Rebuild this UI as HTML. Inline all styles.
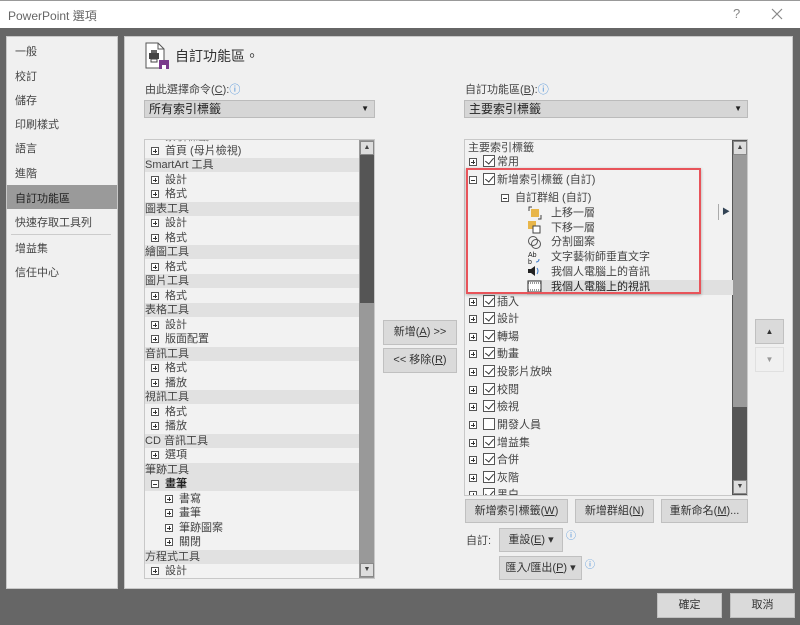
<!DOCTYPE html>
<html><head><meta charset="utf-8"><style>
*{margin:0;padding:0;box-sizing:border-box}
body{width:800px;height:625px;background:#666;position:relative;overflow:hidden;font-family:"Liberation Sans","Noto Sans CJK TC",sans-serif;font-size:11px;color:#444}
.a{position:absolute;white-space:nowrap}
.title{left:0;top:0;width:800px;height:28px;background:#fff;border-top:1px solid #999}
.panel{background:#f0f0f0;border:1px solid #c8c8c8}
.nav div{position:absolute;left:8px;font-size:11px;color:#444}
.btn{position:absolute;background:#dadada;border:1px solid #c0c0c0;text-align:center;font-size:11px;color:#333;line-height:20px}
.list{background:#f2f2f2;border:1px solid #c8c8c8}
.r{position:absolute;left:0;height:14px;line-height:14px;font-size:11px;color:#444}
.h{background:#e1e1e1;width:214px}
.pb{display:inline-block;width:8px;height:8px;border:1px solid #555;position:relative;vertical-align:-1px;margin-right:6px;background:#fff}
.pb:before{content:"";position:absolute;left:1px;top:2.5px;width:4px;height:1px;background:#333}
.pb.p:after{content:"";position:absolute;left:2.5px;top:1px;width:1px;height:4px;background:#333}
.cb{display:inline-block;width:12px;height:12px;border:1px solid #555;background:#fff;vertical-align:-2px;margin-right:2px;position:relative}
.cb.c:after{content:"";position:absolute;left:3px;top:0px;width:4px;height:7px;border-right:1px solid #333;border-bottom:1px solid #333;transform:rotate(40deg)}
</style></head><body>
<div class="a title"></div>
<div class="a" style="left:8px;top:7px;font-size:12px;color:#666">PowerPoint 選項</div>
<div class="a" style="left:733px;top:6px;font-size:13px;color:#888">?</div>
<svg class="a" style="left:771px;top:8px" width="12" height="12"><path d="M1 1L11 11M11 1L1 11" stroke="#888" stroke-width="1.2"/></svg>

<div class="a panel nav" style="left:6px;top:36px;width:112px;height:553px">
<div style="top:6px">一般</div>
<div style="top:31px">校訂</div>
<div style="top:55px">儲存</div>
<div style="top:79px">印刷樣式</div>
<div style="top:103px">語言</div>
<div style="top:128px">進階</div>
<div style="top:148px;left:0;width:110px;height:24px;background:#9a9a9a"></div>
<div style="top:153px;color:#222">自訂功能區</div>
<div style="top:177px">快速存取工具列</div>
<div style="top:197px;left:4px;width:100px;height:1px;background:#ccc"></div>
<div style="top:203px">增益集</div>
<div style="top:227px">信任中心</div>
</div>

<div class="a panel" style="left:124px;top:36px;width:669px;height:553px"></div>
<svg class="a" style="left:145px;top:42px" width="26" height="28" viewBox="0 0 26 28"><path d="M1 1h12l6 6v19H1z" fill="#fff" stroke="#555"/><path d="M13 1v6h6" fill="none" stroke="#555"/><rect x="4" y="11" width="10" height="6" fill="#444"/><rect x="6" y="8" width="6" height="3" fill="#666"/><rect x="6" y="17" width="6" height="3" fill="#fff" stroke="#444"/><rect x="14" y="18" width="10" height="9" fill="#7a3a8c"/><rect x="17" y="23" width="4" height="4" fill="#fff"/></svg>
<div class="a" style="left:175px;top:46px;font-size:14px;color:#333">自訂功能區。</div>
<div class="a" style="left:145px;top:81px;color:#444">由此選擇命令(<u>C</u>):<span style="color:#4a90d9">ⓘ</span></div>
<div class="a" style="left:144px;top:100px;width:231px;height:18px;background:#d6d6d6;border:1px solid #bbb;padding-left:4px;line-height:16px;color:#222;font-size:12px">所有索引標籤<span style="position:absolute;right:5px;font-size:8px">▼</span></div>
<div class="a" style="left:465px;top:81px;color:#444">自訂功能區(<u>B</u>):<span style="color:#4a90d9">ⓘ</span></div>
<div class="a" style="left:464px;top:100px;width:284px;height:18px;background:#d6d6d6;border:1px solid #bbb;padding-left:4px;line-height:16px;color:#222;font-size:12px">主要索引標籤<span style="position:absolute;right:5px;font-size:8px">▼</span></div>

<div class="a list" style="left:144px;top:139px;width:231px;height:440px;overflow:hidden">
<div class="a" style="left:214px;top:0;width:16px;height:439px;background:#999"></div>
<div class="a" style="left:215px;top:15px;width:14px;height:148px;background:#555"></div>
<div class="a" style="left:215px;top:1px;width:14px;height:14px;background:#ddd;border:1px solid #888;font-size:7px;text-align:center;line-height:12px">▲</div>
<div class="a" style="left:215px;top:423px;width:14px;height:14px;background:#ddd;border:1px solid #888;font-size:7px;text-align:center;line-height:12px">▼</div>
<div class="r" style="top:-10px;left:20px;color:#777">索引標籤</div>
<div class="r" style="top:4px;left:6px"><span class="pb p"></span>首頁 (母片檢視)</div>
<div class="r h" style="top:18px">SmartArt 工具</div>
<div class="r" style="top:33px;left:6px"><span class="pb p"></span>設計</div>
<div class="r" style="top:47px;left:6px"><span class="pb p"></span>格式</div>
<div class="r h" style="top:62px">圖表工具</div>
<div class="r" style="top:76px;left:6px"><span class="pb p"></span>設計</div>
<div class="r" style="top:91px;left:6px"><span class="pb p"></span>格式</div>
<div class="r h" style="top:105px">繪圖工具</div>
<div class="r" style="top:120px;left:6px"><span class="pb p"></span>格式</div>
<div class="r h" style="top:134px">圖片工具</div>
<div class="r" style="top:149px;left:6px"><span class="pb p"></span>格式</div>
<div class="r h" style="top:163px">表格工具</div>
<div class="r" style="top:178px;left:6px"><span class="pb p"></span>設計</div>
<div class="r" style="top:192px;left:6px"><span class="pb p"></span>版面配置</div>
<div class="r h" style="top:207px">音訊工具</div>
<div class="r" style="top:221px;left:6px"><span class="pb p"></span>格式</div>
<div class="r" style="top:236px;left:6px"><span class="pb p"></span>播放</div>
<div class="r h" style="top:250px">視訊工具</div>
<div class="r" style="top:265px;left:6px"><span class="pb p"></span>格式</div>
<div class="r" style="top:279px;left:6px"><span class="pb p"></span>播放</div>
<div class="r h" style="top:294px">CD 音訊工具</div>
<div class="r" style="top:308px;left:6px"><span class="pb p"></span>選項</div>
<div class="r h" style="top:323px">筆跡工具</div>
<div class="r h" style="top:337px;padding-left:6px"><span class="pb"></span><b style="color:#222">畫筆</b></div>
<div class="r" style="top:352px;left:20px"><span class="pb p"></span>書寫</div>
<div class="r" style="top:366px;left:20px"><span class="pb p"></span>畫筆</div>
<div class="r" style="top:381px;left:20px"><span class="pb p"></span>筆跡圖案</div>
<div class="r" style="top:395px;left:20px"><span class="pb p"></span>關閉</div>
<div class="r h" style="top:410px">方程式工具</div>
<div class="r" style="top:424px;left:6px"><span class="pb p"></span>設計</div>
</div>

<div class="btn" style="left:383px;top:320px;width:74px;height:25px;line-height:23px">新增(<u>A</u>) &gt;&gt;</div>
<div class="btn" style="left:383px;top:348px;width:74px;height:25px;line-height:23px">&lt;&lt; 移除(<u>R</u>)</div>

<div class="a list" style="left:464px;top:139px;width:284px;height:357px;overflow:hidden">
<div class="a" style="left:267px;top:0;width:16px;height:356px;background:#555"></div>
<div class="a" style="left:268px;top:15px;width:14px;height:252px;background:#9a9a9a"></div>
<div class="a" style="left:268px;top:1px;width:14px;height:14px;background:#ddd;border:1px solid #888;font-size:7px;text-align:center;line-height:12px">▲</div>
<div class="a" style="left:268px;top:340px;width:14px;height:14px;background:#ddd;border:1px solid #888;font-size:7px;text-align:center;line-height:12px">▼</div>
<div class="r" style="top:1px;left:3px">主要索引標籤</div>
<div class="r" style="top:15px;left:4px"><span class="pb p"></span><span class="cb c"></span>常用</div>
<div class="r" style="top:33px;left:4px"><span class="pb"></span><span class="cb c"></span>新增索引標籤 (自訂)</div>
<div class="r" style="top:51px;left:36px"><span class="pb"></span>自訂群組 (自訂)</div>
<div class="a" style="left:62px;top:140px;width:206px;height:15px;background:#e0e0e0"></div>
<div class="r" style="top:66px;left:86px">上移一層</div>
<div class="r" style="top:81px;left:86px">下移一層</div>
<div class="r" style="top:95px;left:86px">分割圖案</div>
<div class="r" style="top:110px;left:86px">文字藝術師垂直文字</div>
<div class="r" style="top:125px;left:86px">我個人電腦上的音訊</div>
<div class="r" style="top:140px;left:86px;color:#222">我個人電腦上的視訊</div>
<svg class="a" style="left:62px;top:66px" width="16" height="90" viewBox="0 0 16 90">
<rect x="4" y="3" width="8" height="8" fill="#e8b64a"/><path d="M2 5V1h3M14 9v4h-3" fill="none" stroke="#444"/>
<rect x="1" y="15" width="8" height="8" fill="#e8b64a"/><rect x="6" y="20" width="7" height="7" fill="#fff" stroke="#444"/>
<circle cx="6" cy="35" r="4.5" fill="none" stroke="#555"/><circle cx="9" cy="38" r="4.5" fill="none" stroke="#555"/>
<text x="1" y="51" font-size="7" fill="#222" font-family="Liberation Sans">Ab</text><text x="1" y="58" font-size="7" fill="#222" font-family="Liberation Sans">b</text><path d="M9 56q3 0 3-3" fill="none" stroke="#3a78c8"/>
<path d="M1 63h3l4-3v10l-4-3H1z" fill="#222"/><path d="M10 62q2 3 0 6" fill="none" stroke="#3a78c8"/>
<rect x="1" y="75" width="13" height="11" fill="#fff" stroke="#333"/><path d="M1 77h13M1 84h13" stroke="#333" stroke-dasharray="1 1"/>
</svg>
<div class="r" style="top:155px;left:4px"><span class="pb p"></span><span class="cb c"></span>插入</div>
<div class="r" style="top:172px;left:4px"><span class="pb p"></span><span class="cb c"></span>設計</div>
<div class="r" style="top:190px;left:4px"><span class="pb p"></span><span class="cb c"></span>轉場</div>
<div class="r" style="top:207px;left:4px"><span class="pb p"></span><span class="cb c"></span>動畫</div>
<div class="r" style="top:225px;left:4px"><span class="pb p"></span><span class="cb c"></span>投影片放映</div>
<div class="r" style="top:243px;left:4px"><span class="pb p"></span><span class="cb c"></span>校閱</div>
<div class="r" style="top:260px;left:4px"><span class="pb p"></span><span class="cb c"></span>檢視</div>
<div class="r" style="top:278px;left:4px"><span class="pb p"></span><span class="cb"></span>開發人員</div>
<div class="r" style="top:296px;left:4px"><span class="pb p"></span><span class="cb c"></span>增益集</div>
<div class="r" style="top:313px;left:4px"><span class="pb p"></span><span class="cb c"></span>合併</div>
<div class="r" style="top:331px;left:4px"><span class="pb p"></span><span class="cb c"></span>灰階</div>
<div class="r" style="top:348px;left:4px"><span class="pb p"></span><span class="cb c"></span>黑白</div>
</div>
<div class="a" style="left:466px;top:168px;width:235px;height:126px;border:2px solid #e8545a;box-shadow:0 1px 3px rgba(0,0,0,.3)"></div>
<div class="a" style="left:718px;top:204px;width:1px;height:16px;background:#aaa"></div>
<div class="a" style="left:722px;top:206px;font-size:8px;color:#345">▶</div>

<div class="btn" style="left:755px;top:319px;width:29px;height:25px;line-height:23px;font-size:8px">▲</div>
<div class="btn" style="left:755px;top:347px;width:29px;height:25px;line-height:23px;font-size:8px;background:#f0f0f0;border-color:#e0e0e0;color:#999">▼</div>

<div class="btn" style="left:465px;top:499px;width:103px;height:24px;line-height:22px">新增索引標籤(<u>W</u>)</div>
<div class="btn" style="left:575px;top:499px;width:79px;height:24px;line-height:22px">新增群組(<u>N</u>)</div>
<div class="btn" style="left:661px;top:499px;width:87px;height:24px;line-height:22px">重新命名(<u>M</u>)...</div>
<div class="a" style="left:466px;top:532px">自訂:</div>
<div class="btn" style="left:499px;top:528px;width:64px;height:24px;line-height:22px">重設(<u>E</u>) ▾</div>
<div class="a" style="left:566px;top:527px;color:#4a90d9;font-size:10px">ⓘ</div>
<div class="btn" style="left:499px;top:556px;width:83px;height:24px;line-height:22px">匯入/匯出(<u>P</u>) ▾</div>
<div class="a" style="left:585px;top:556px;color:#4a90d9;font-size:10px">ⓘ</div>

<div class="btn" style="left:657px;top:593px;width:65px;height:25px;line-height:23px">確定</div>
<div class="btn" style="left:730px;top:593px;width:65px;height:25px;line-height:23px">取消</div>
</body></html>
